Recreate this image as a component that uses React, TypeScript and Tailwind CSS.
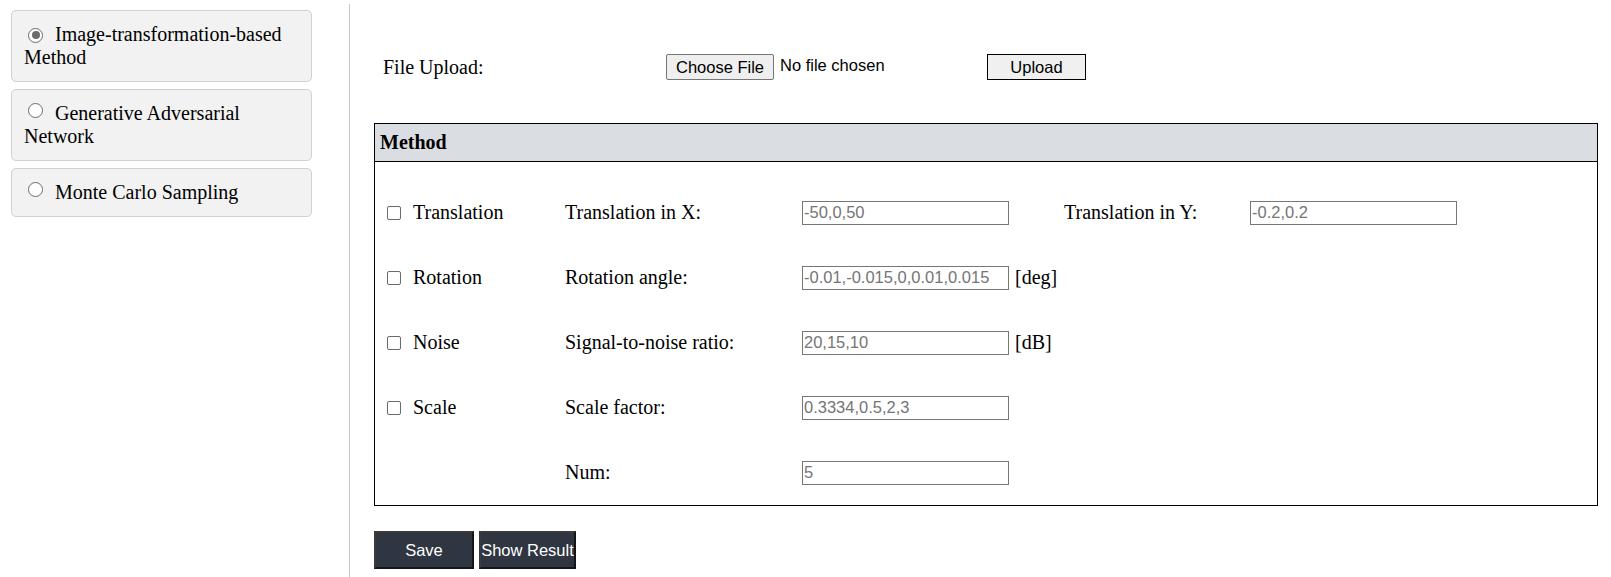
const serif = { fontFamily: '"Liberation Serif", "Times New Roman", serif' };

function Radio({ checked }: { checked?: boolean }) {
  return (
    <span className="inline-flex items-center justify-center w-[15px] h-[15px] rounded-full border-[1.5px] border-[#6b6b6b] bg-white align-[2px] ml-[4px] mr-[12px]">
      {checked && <span className="w-[8px] h-[8px] rounded-full bg-[#6b6b6b]" />}
    </span>
  );
}

function Check() {
  return <span className="inline-block w-[14px] h-[14px] rounded-[2px] border-[1.5px] border-[#6b6b6b] bg-white mr-[12px] shrink-0" />;
}

function Field({ value }: { value: string }) {
  return (
    <div className="w-[207px] h-[24px] border border-[#767676] bg-white px-[1px] flex items-center text-[16.5px] text-[#757575] font-['Liberation_Sans',Arial,sans-serif] leading-none shrink-0">
      {value}
    </div>
  );
}

const rows = [
  { check: "Translation", label: "Translation in X:", value: "-50,0,50", extra: true },
  { check: "Rotation", label: "Rotation angle:", value: "-0.01,-0.015,0,0.01,0.015", unit: "[deg]" },
  { check: "Noise", label: "Signal-to-noise ratio:", value: "20,15,10", unit: "[dB]" },
  { check: "Scale", label: "Scale factor:", value: "0.3334,0.5,2,3" },
  { check: "", label: "Num:", value: "5" },
];

export default function App() {
  return (
    <div className="flex w-[1611px] h-[577px] bg-white text-black text-[20px] leading-[23px]" style={serif}>
      {/* Sidebar */}
      <div className="w-[349px] shrink-0 pl-[11px] pt-[10px] flex flex-col gap-[7px]">
        <div className="w-[301px] bg-[#f2f2f2] border border-[#d0d0d0] rounded-[5px] px-[12px] py-[12px]">
          <Radio checked />Image-transformation-based Method
        </div>
        <div className="w-[301px] bg-[#f2f2f2] border border-[#d0d0d0] rounded-[5px] px-[12px] py-[12px]">
          <Radio />Generative Adversarial Network
        </div>
        <div className="w-[301px] bg-[#f2f2f2] border border-[#d0d0d0] rounded-[5px] px-[12px] py-[12px]">
          <Radio />Monte Carlo Sampling
        </div>
      </div>

      <div className="w-px bg-[#c6c6c6] mt-[4px] shrink-0" />

      {/* Main */}
      <div className="flex-1 pl-[24px] pr-[13px] pt-[54px]">
        <div className="flex items-center h-[26px]">
          <div className="w-[292px] pl-[9px]">File Upload:</div>
          <div className="w-[321px] flex items-center font-['Liberation_Sans',Arial,sans-serif] text-[16.5px]">
            <button className="w-[108px] h-[26px] rounded-[2px] border border-[#767676] bg-[#efefef] leading-none">Choose File</button>
            <span className="ml-[6px] -mt-[3px]">No file chosen</span>
          </div>
          <button className="w-[99px] h-[26px] border border-black bg-[#f0f0f0] font-['Liberation_Sans',Arial,sans-serif] text-[16.5px] leading-none">Upload</button>
        </div>

        <div className="mt-[43px] border border-black h-[383px]">
          <div className="h-[38px] bg-[#dadee2] border-b border-black flex items-center pl-[5px] font-bold">Method</div>
          <div className="pt-[18px]">
            {rows.map((r, i) => (
              <div key={i} className="h-[65px] flex items-center pl-[12px]">
                <div className="w-[178px] flex items-center">
                  {r.check && (
                    <>
                      <Check />
                      <span>{r.check}</span>
                    </>
                  )}
                </div>
                <div className="w-[237px]">{r.label}</div>
                <div className="w-[262px] flex items-center">
                  <Field value={r.value} />
                  {r.unit && <span className="ml-[6px]">{r.unit}</span>}
                </div>
                {r.extra && (
                  <>
                    <div className="w-[186px]">Translation in Y:</div>
                    <Field value="-0.2,0.2" />
                  </>
                )}
              </div>
            ))}
          </div>
        </div>

        <div className="mt-[25px] flex gap-[5px] font-['Liberation_Sans',Arial,sans-serif] text-[16.5px] text-white">
          <button className="w-[100px] h-[38px] bg-[#2f3541] border-2 border-t-[#3a3a3a] border-l-[#3a3a3a] border-b-[#151515] border-r-[#151515] leading-none">Save</button>
          <button className="w-[97px] h-[38px] bg-[#2f3541] border-2 border-t-[#3a3a3a] border-l-[#3a3a3a] border-b-[#151515] border-r-[#151515] px-0 whitespace-nowrap leading-none">Show Result</button>
        </div>
      </div>
    </div>
  );
}
